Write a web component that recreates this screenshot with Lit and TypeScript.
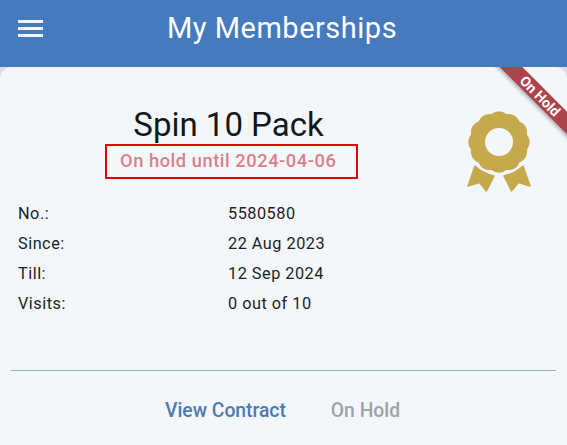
import { LitElement, html, css, svg } from 'lit';
import { customElement, property } from 'lit/decorators.js';

// scalloped seal outline, centre (0,0)
function sealPath(points: number, outer: number, inner: number): string {
  const step = (Math.PI * 2) / points;
  let d = '';
  for (let i = 0; i < points; i++) {
    const a = i * step - Math.PI / 2;
    const x0 = Math.cos(a - step / 2) * inner;
    const y0 = Math.sin(a - step / 2) * inner;
    const cx = Math.cos(a) * (outer + (outer - inner) * 0.9);
    const cy = Math.sin(a) * (outer + (outer - inner) * 0.9);
    const x1 = Math.cos(a + step / 2) * inner;
    const y1 = Math.sin(a + step / 2) * inner;
    if (i === 0) d += `M${x0.toFixed(2)} ${y0.toFixed(2)}`;
    d += `Q${cx.toFixed(2)} ${cy.toFixed(2)} ${x1.toFixed(2)} ${y1.toFixed(2)}`;
  }
  return d + 'Z';
}

@customElement('member-badge')
export class MemberBadge extends LitElement {
  static override styles = css`
    :host {
      display: block;
      width: 64px;
      height: 82px;
    }
    svg {
      display: block;
      overflow: visible;
    }
  `;

  override render() {
    return html`
      <svg width="64" height="82" viewBox="0 0 64 82">
        <g fill="#c5a94c">
          ${svg`<path transform="translate(32 31)" fill-rule="evenodd" d="${sealPath(12, 31.4, 29)}M14 0A14 14 0 1 0 -14 0A14 14 0 1 0 14 0Z"></path>`}
          <path d="M8 55Q15 62 27 65L19.5 80 12.5 71.5 1 75Z" stroke="#c5a94c" stroke-width="1.5" stroke-linejoin="round"></path>
          <path d="M56 55Q49 62 37 65L44.5 80 51.5 71.5 63 75Z" stroke="#c5a94c" stroke-width="1.5" stroke-linejoin="round"></path>
        </g>
      </svg>
    `;
  }
}

@customElement('app-root')
export class AppRoot extends LitElement {
  static override styles = css`
    :host {
      display: flex;
      flex-direction: column;
      width: 567px;
      height: 445px;
      overflow: hidden;
      background: #dcdcdc;
      font-family: Roboto, 'Liberation Sans', sans-serif;
    }

    header {
      flex: none;
      display: flex;
      align-items: center;
      height: 67px;
      padding: 0 0 10px 18px;
      background: #467abf;
      color: #fff;
      box-sizing: border-box;
    }

    .menu {
      display: flex;
      flex-direction: column;
      gap: 4px;
      width: 25px;
    }

    .menu span {
      height: 3px;
      background: #f2f6fc;
    }

    h1 {
      margin: 0 0 0 124px;
      font-size: 29px;
      font-weight: 400;
      letter-spacing: 0.5px;
      line-height: 1;
    }

    .card {
      flex: 1;
      position: relative;
      overflow: hidden;
      display: flex;
      flex-direction: column;
      background: #f3f7fb;
      border-radius: 12px 12px 0 0;
    }

    .top {
      display: flex;
      padding-top: 38px;
    }

    .head {
      width: 457px;
      display: flex;
      flex-direction: column;
      align-items: center;
    }

    h2 {
      margin: 0;
      font-size: 33px;
      font-weight: 400;
      line-height: 40px;
      color: #14171a;
    }

    .status {
      box-sizing: border-box;
      width: 253px;
      height: 35px;
      margin-left: 6px;
      margin-top: -1px;
      padding-left: 13px;
      border: 2px solid #e60000;
      font-size: 18.3px;
      font-weight: 500;
      letter-spacing: 0.55px;
      line-height: 29px;
      color: #dc8088;
      white-space: nowrap;
    }

    member-badge {
      flex: none;
      margin: 6px 0 -20px 10px;
    }

    .info {
      display: grid;
      grid-template-columns: 210px auto;
      grid-auto-rows: 30px;
      padding: 20px 0 0 18px;
      font-size: 16.3px;
      letter-spacing: 0.5px;
      line-height: 30px;
      color: #1c1f22;
    }

    hr {
      width: 545px;
      margin: 51px 0 0 11px;
      border: 0;
      border-top: 1.5px solid #94b2d2;
    }

    .actions {
      display: flex;
      gap: 45px;
      padding: 28px 0 0 165px;
      font-size: 19.3px;
      font-weight: 500;
      line-height: 24px;
    }

    .link {
      color: #4a7bb2;
    }

    .off {
      color: #9ea3a8;
    }

    .ribbon {
      position: absolute;
      top: 21px;
      right: -38px;
      width: 130px;
      height: 16px;
      transform: rotate(45deg);
      background: #ad444b;
      box-shadow: 0 2px 4px rgba(0, 0, 0, 0.3);
      color: #fff;
      font-size: 14px;
      font-weight: 700;
      line-height: 16px;
      text-align: center;
    }
  `;

  @property({ type: Array }) rows = [
    ['No.:', '5580580'],
    ['Since:', '22 Aug 2023'],
    ['Till:', '12 Sep 2024'],
    ['Visits:', '0 out of 10'],
  ];

  override render() {
    return html`
      <header>
        <div class="menu"><span></span><span></span><span></span></div>
        <h1>My Memberships</h1>
      </header>
      <section class="card">
        <div class="top">
          <div class="head">
            <h2>Spin 10 Pack</h2>
            <div class="status">On hold until 2024-04-06</div>
          </div>
          <member-badge></member-badge>
        </div>
        <div class="info">
          ${this.rows.map(([k, v]) => html`<span>${k}</span><span>${v}</span>`)}
        </div>
        <hr />
        <div class="actions">
          <span class="link">View Contract</span>
          <span class="off">On Hold</span>
        </div>
        <div class="ribbon">On Hold</div>
      </section>
    `;
  }
}
